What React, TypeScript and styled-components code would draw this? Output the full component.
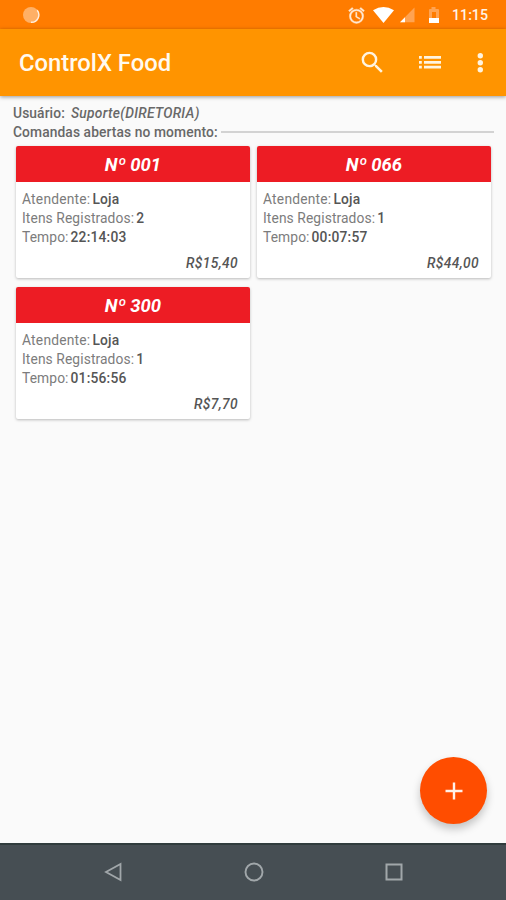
import React from "react";
import styled, { createGlobalStyle } from "styled-components";

const GlobalStyle = createGlobalStyle`
  * { box-sizing: border-box; }
  html, body { margin: 0; padding: 0; }
  body { font-family: Roboto, "Liberation Sans", sans-serif; background: #fafafa; }
  svg { display: block; flex: none; }
`;

const Screen = styled.div`
  position: relative;
  display: flex;
  flex-direction: column;
  width: 506px;
  height: 900px;
  overflow: hidden;
  background: #fafafa;
`;

const StatusBar = styled.div`
  flex: none;
  display: flex;
  align-items: center;
  height: 29px;
  padding: 1px 17px 0 22px;
  background: #ff7c00;
`;

const StatusIcons = styled.div`
  display: flex;
  align-items: center;
  margin-left: auto;
`;

const Clock = styled.span`
  width: 37px;
  margin: 0 0 0 12px;
  color: #fff3e6;
  font-size: 14.2px;
  font-weight: 500;
  line-height: 20px;
  white-space: nowrap;
`;

const Toolbar = styled.header`
  flex: none;
  z-index: 1;
  display: flex;
  align-items: center;
  height: 67px;
  padding: 0 18px 0 19px;
  background: #ff9400;
  box-shadow: 0 1px 4px rgba(0, 0, 0, 0.4);
`;

const Title = styled.h1`
  flex: 1;
  margin: 1px 0 0;
  color: #fffaf0;
  font-size: 23.8px;
  font-weight: 500;
  line-height: 32px;
`;

const ActionButton = styled.button<{ $gap?: number }>`
  display: grid;
  place-items: center;
  padding: 0;
  margin: 0 0 0 ${(p) => p.$gap ?? 0}px;
  border: 0;
  background: none;
`;

const Content = styled.main`
  flex: 1;
  padding: 7px 12px 0;
`;

const InfoLine = styled.div`
  display: flex;
  align-items: center;
  height: 19px;
  padding-left: 1px;
  color: #686868;
  font-size: 13.8px;
  font-weight: 500;
  letter-spacing: 0.1px;
  white-space: pre;
`;

const UserName = styled.em`
  margin-left: 6px;
  letter-spacing: 0.28px;
`;

const Divider = styled.span`
  flex: 1;
  height: 2.5px;
  margin: 1px 0 0 3px;
  background: #d3d3d3;
`;

const TabGrid = styled.section`
  display: grid;
  grid-template-columns: 234px 234px;
  gap: 9px 7px;
  padding: 5px 4px 0;
`;

const Card = styled.article`
  height: 132px;
  overflow: hidden;
  border-radius: 2px;
  background: #fff;
  box-shadow: 0 1px 3px rgba(0, 0, 0, 0.26);
`;

const CardHeader = styled.h2`
  height: 36px;
  margin: 0;
  background: #ed1c24;
  color: #fff;
  font-size: 18.5px;
  font-style: italic;
  font-weight: 700;
  line-height: 38px;
  text-align: center;
`;

const Details = styled.dl`
  margin: 0;
  padding: 8px 6px 0;
`;

const Detail = styled.div`
  display: flex;
  gap: 2px;
  height: 19.2px;
  color: #7c7c7c;
  font-size: 13.8px;
  letter-spacing: 0.1px;
  line-height: 19.2px;

  &:first-child {
    letter-spacing: 0.22px;
  }
`;

const Value = styled.dd`
  margin: 0;
  color: #555;
  font-weight: 500;
  letter-spacing: 0.2px;
`;

const Price = styled.div`
  padding: 6px 12px 0 0;
  color: #555;
  font-size: 13.8px;
  font-style: italic;
  font-weight: 500;
  letter-spacing: 0.35px;
  line-height: 19px;
  text-align: right;
`;

const AddButton = styled.button`
  position: absolute;
  right: 19px;
  bottom: 76px;
  display: grid;
  place-items: center;
  width: 67px;
  height: 67px;
  padding: 0;
  border: 0;
  border-radius: 50%;
  background: #ff4d00;
  box-shadow: 0 5px 8px rgba(0, 0, 0, 0.22);
`;

const NavigationBar = styled.nav`
  flex: none;
  display: flex;
  align-items: center;
  justify-content: space-between;
  height: 57px;
  padding: 0 102px 1px 103px;
  border-top: 2px solid #303c3d;
  background: #464e53;
`;

type Tab = { number: string; attendant: string; items: number; time: string; total: string };

const tabs: Tab[] = [
  { number: "001", attendant: "Loja", items: 2, time: "22:14:03", total: "R$15,40" },
  { number: "066", attendant: "Loja", items: 1, time: "00:07:57", total: "R$44,00" },
  { number: "300", attendant: "Loja", items: 1, time: "01:56:56", total: "R$7,70" },
];

function TabCard({ tab }: { tab: Tab }) {
  return (
    <Card>
      <CardHeader>Nº {tab.number}</CardHeader>
      <Details>
        <Detail><dt>Atendente:</dt><Value>{tab.attendant}</Value></Detail>
        <Detail><dt>Itens Registrados:</dt><Value>{tab.items}</Value></Detail>
        <Detail><dt>Tempo:</dt><Value>{tab.time}</Value></Detail>
      </Details>
      <Price>{tab.total}</Price>
    </Card>
  );
}

export default function App() {
  return (
    <Screen>
      <GlobalStyle />
      <StatusBar>
        <svg width="18" height="18" viewBox="0 0 18 18">
          <circle cx="9" cy="9" r="8" fill="#ffb066" />
          <path d="M15.2 4.3A7.4 7.4 0 0 1 9 16.3" fill="none" stroke="#ffeedd" strokeWidth="1.4" />
        </svg>
        <StatusIcons>
          <svg width="19" height="19" viewBox="0 0 24 24" fill="#ffead6" stroke="#ffead6" strokeWidth="0.5">
            <path d="M22 5.72l-4.6-3.86-1.29 1.53 4.6 3.86L22 5.72zM7.88 3.39L6.6 1.86 2 5.71l1.29 1.53 4.59-3.85zM12.5 8H11v6l4.75 2.85.75-1.23-4-2.37V8zM12 4a9 9 0 1 0 .01 18A9 9 0 0 0 12 4zm0 16a7 7 0 1 1 0-14 7 7 0 0 1 0 14z" />
          </svg>
          <svg width="62" height="20" viewBox="0 0 62 20">
            <path d="M7 5.200Q17.500-1 28 5.200L17.500 18Z" fill="#fff" />
            <path d="M48.500 2.500v14.800H34Z" fill="#ffa352" />
            <path d="M39 12.300v5h-5Z" fill="#fff" />
          </svg>
          <svg width="12" height="18" viewBox="0 0 12 18">
            <path d="M3.500 1h4v2H10q1 0 1 1v13H1V4q0-1 1-1h1.500Z" fill="#ffa352" />
            <path d="M1 12h10v5H1Z" fill="#fff" />
            <path d="M4 6h4v6H4Z" fill="#ff7c00" />
          </svg>
          <Clock>11:15</Clock>
        </StatusIcons>
      </StatusBar>
      <Toolbar>
        <Title>ControlX Food</Title>
        <ActionButton aria-label="Buscar">
          <svg width="29" height="29" viewBox="0 0 24 24" fill="#fff4e0">
            <path d="M15.5 14h-.79l-.28-.27A6.47 6.47 0 0 0 16 9.500 6.500 6.500 0 1 0 9.500 16c1.610 0 3.090-.59 4.230-1.570l.27.28v.79l5 4.990L20.490 19l-4.990-5zm-6 0a4.500 4.500 0 1 1 0-9 4.500 4.500 0 0 1 0 9z" />
          </svg>
        </ActionButton>
        <ActionButton aria-label="Lista" $gap={31}>
          <svg width="24" height="16" viewBox="0 0 24 16" fill="#fff4e0">
            <path d="M1 1h2.800v2.800H1ZM1 5.900h2.800v2.800H1ZM1 10.800h2.800v2.800H1ZM6 1h17v2.800H6ZM6 5.900h17v2.800H6ZM6 10.800h17v2.800H6Z" />
          </svg>
        </ActionButton>
        <ActionButton aria-label="Mais opções" $gap={30}>
          <svg width="16" height="22" viewBox="0 0 16 22" fill="#fff4e0">
            <circle cx="8.300" cy="3.700" r="2.700" />
            <circle cx="8.300" cy="10.700" r="2.700" />
            <circle cx="8.300" cy="17.700" r="2.700" />
          </svg>
        </ActionButton>
      </Toolbar>
      <Content>
        <InfoLine>Usuário:<UserName>Suporte(DIRETORIA)</UserName></InfoLine>
        <InfoLine>Comandas abertas no momento:<Divider /></InfoLine>
        <TabGrid>
          {tabs.map((tab) => <TabCard key={tab.number} tab={tab} />)}
        </TabGrid>
      </Content>
      <AddButton aria-label="Adicionar">
        <svg width="18" height="18" viewBox="0 0 18 18">
          <path d="M9 0.500v17M0.500 9h17" stroke="#fff0e8" strokeWidth="2.400" />
        </svg>
      </AddButton>
      <NavigationBar>
        <svg width="20" height="20" viewBox="0 0 20 20" fill="none" stroke="#a1a7aa" strokeWidth="1.800">
          <path d="M17.500 2v16L3 10Z" />
        </svg>
        <svg width="20" height="20" viewBox="0 0 20 20" fill="none" stroke="#a1a7aa" strokeWidth="1.900">
          <circle cx="10" cy="10" r="8.500" />
        </svg>
        <svg width="20" height="20" viewBox="0 0 20 20" fill="none" stroke="#a1a7aa" strokeWidth="2">
          <rect x="2.500" y="2.500" width="15" height="15" />
        </svg>
      </NavigationBar>
    </Screen>
  );
}
